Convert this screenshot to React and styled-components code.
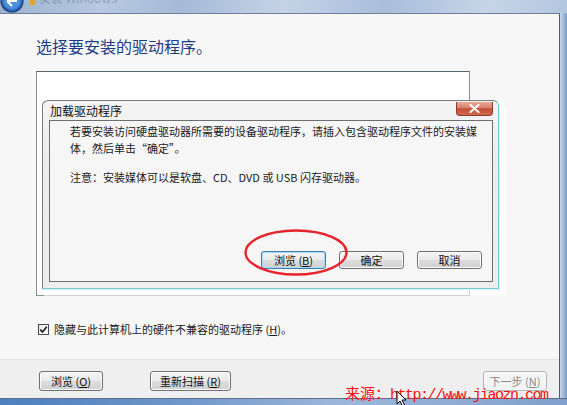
import React from 'react';
import styled, { createGlobalStyle } from 'styled-components';

const GlobalStyle = createGlobalStyle`
  html, body {
    margin: 0;
    padding: 0;
  }
  body {
    width: 567px;
    height: 405px;
    overflow: hidden;
    background: #8aa7cf;
    font-family: "Noto Sans CJK SC", "Liberation Sans", sans-serif;
  }
`;

const Screen = styled.div`
  position: relative;
  width: 567px;
  height: 405px;
  display: flex;
  flex-direction: column;
  overflow: hidden;
`;

const TitleBar = styled.div`
  flex: none;
  height: 13px;
  display: flex;
  align-items: flex-end;
  gap: 6px;
  overflow: hidden;
  background: linear-gradient(
    100deg,
    #9cb2cf 0%,
    #b7c9e0 18%,
    #a5bad7 32%,
    #c4d3e7 50%,
    #a9bedb 68%,
    #c6d5e8 86%,
    #b2c6df 100%
  );
`;

const TitleText = styled.span`
  align-self: flex-start;
  margin-top: -11px;
  font-size: 12px;
  color: rgba(40, 60, 90, 0.3);
  display: flex;
  align-items: center;
  gap: 4px;
`;

const TitleDot = styled.i`
  display: inline-block;
  width: 5px;
  height: 5px;
  margin-top: 10px;
  border-radius: 1px;
  background: #e8a030;
`;

const Middle = styled.div`
  flex: 1;
  display: flex;
  min-height: 0;
`;

const Window = styled.div`
  width: 560px;
  box-sizing: border-box;
  display: flex;
  flex-direction: column;
  border-top: 1px solid #6f7f96;
  border-right: 1px solid #4f5a69;
  background: #f7f7f7;
`;

const RightFrame = styled.div`
  flex: 1;
  background: linear-gradient(90deg, #c9d8ea 0%, #a8bfdc 40%, #7d9ccb 100%);
`;

const BottomFrame = styled.div`
  flex: none;
  height: 7px;
  border-top: 1px solid #5e6f86;
  box-sizing: border-box;
  background: linear-gradient(90deg, #4d7fbe 0%, #6c95c9 30%, #9db7da 60%, #7fa0cd 100%);
`;

const Content = styled.div`
  flex: 1;
  padding: 22px 0 0 36px;
  display: flex;
  flex-direction: column;
  align-items: flex-start;
`;

const Heading = styled.h1`
  margin: 0 0 15px;
  font-size: 16px;
  line-height: 20px;
  font-weight: 400;
  color: #1f3a86;
`;

const ListBox = styled.div`
  position: relative;
  width: 434px;
  height: 225px;
  box-sizing: border-box;
  border: 1px solid #8a8f97;
  border-top-color: #5c626b;
  background: #ffffff;
`;

const Dialog = styled.div`
  position: absolute;
  left: 5px;
  top: 28px;
  width: 457px;
  height: 189px;
  box-sizing: border-box;
  display: flex;
  flex-direction: column;
  border: 1px solid #7a7a7a;
  border-right-color: #73ccd6;
  border-bottom-color: #73ccd6;
  border-radius: 6px 6px 0 0;
  background: linear-gradient(#f4f4f4, #ececec 40%, #eeeeee);
  box-shadow: 1px 1px 0 #d8eef1, 5px 4px 0 3px rgba(255, 255, 255, 0.6);
`;

const DialogTitle = styled.div`
  height: 19px;
  padding-left: 7px;
  font-size: 12px;
  line-height: 20px;
  color: #111;
`;

const CloseButton = styled.div`
  position: absolute;
  top: 1px;
  right: 5px;
  width: 37px;
  height: 14px;
  box-sizing: border-box;
  display: flex;
  align-items: center;
  justify-content: center;
  border: 1px solid #8b3a2c;
  border-top: none;
  border-radius: 0 0 4px 4px;
  background: linear-gradient(#e9a996 0%, #d9806c 45%, #c44c34 52%, #cf6a4f 100%);
`;

const Panel = styled.div`
  flex: 1;
  margin: 0 5px 6px 6px;
  padding: 2px 10px 12px 20px;
  display: flex;
  flex-direction: column;
  border: 1px solid #6e6e6e;
  background: #f6f6f6;
  font-size: 11px;
  line-height: 17px;
  color: #1a1a1a;
`;

const Para = styled.p`
  margin: 0 0 ${(p) => p.$gap || 0}px;
  white-space: nowrap;
`;

const ButtonRow = styled.div`
  margin-top: auto;
  display: flex;
  justify-content: flex-end;
  gap: 13px;
`;

const Button = styled.button`
  box-sizing: border-box;
  width: ${(p) => p.$w}px;
  height: ${(p) => p.$h || 20}px;
  padding: 0;
  border: 1px solid ${(p) => (p.$primary ? '#3b7db0' : p.disabled ? '#aeb3b6' : '#707070')};
  border-radius: 3px;
  background: ${(p) =>
    p.disabled
      ? '#f4f4f4'
      : 'linear-gradient(#f3f3f3 0%, #ebebeb 48%, #dddddd 52%, #d0d0d0 100%)'};
  box-shadow: inset 0 0 0 1px ${(p) => (p.$primary ? '#a9dcf6' : '#fbfbfb')};
  font-family: "Noto Sans CJK SC", "Liberation Sans", sans-serif;
  font-size: 11px;
  line-height: 1;
  text-align: center;
  white-space: nowrap;
  color: ${(p) => (p.disabled ? '#8a8a8a' : '#111')};
`;

const Key = styled.u`
  text-underline-offset: 1px;
`;

const Circled = styled.span`
  position: relative;
  display: flex;
`;

const RedRing = styled.svg`
  position: absolute;
  left: -17px;
  top: -22px;
  width: 104px;
  height: 47px;
  overflow: visible;
  pointer-events: none;
`;

const CheckRow = styled.label`
  margin-top: 26px;
  padding-left: 2px;
  display: flex;
  align-items: center;
  gap: 5px;
  font-size: 11px;
  line-height: 14px;
  color: #1a1a1a;
`;

const CheckBox = styled.span`
  width: 11px;
  height: 11px;
  box-sizing: border-box;
  display: flex;
  align-items: center;
  justify-content: center;
  border: 1px solid #4a4a4a;
  background: linear-gradient(135deg, #e6e6e6, #ffffff);
`;

const Footer = styled.div`
  flex: none;
  height: 39px;
  box-sizing: border-box;
  padding: 11px 12px 0 39px;
  display: flex;
  align-items: flex-start;
  gap: 47px;
  border-top: 1px solid #e4e4e4;
  background: #efefef;
`;

const Spacer = styled.div`
  flex: 1;
`;

const Watermark = styled.div`
  position: absolute;
  left: 345px;
  top: 387px;
  font-family: "Liberation Mono", "Noto Sans CJK SC", monospace;
  font-size: 15px;
  line-height: 18px;
  white-space: nowrap;
  color: #ff1010;
`;

const Url = styled.span`
  letter-spacing: -1.5px;
`;

const Cursor = styled.svg`
  position: absolute;
  left: 396px;
  top: 390px;
  width: 11px;
  height: 17px;
`;

const CloseGlyph = () => (
  <svg width="11" height="9" viewBox="0 0 11 9">
    <path d="M1.5 1 L9.5 8 M9.5 1 L1.5 8" stroke="#ffffff" strokeWidth="2.2" strokeLinecap="round" />
  </svg>
);

const CheckMark = () => (
  <svg width="9" height="9" viewBox="0 0 9 9">
    <path d="M1.2 4.6 L3.5 7 L7.8 1.8" fill="none" stroke="#1c1c1c" strokeWidth="1.6" />
  </svg>
);

const Orb = () => (
  <svg width="24" height="13" viewBox="0 0 24 13">
    <circle cx="12" cy="1" r="11" fill="#2d6cc0" stroke="#1d3f72" strokeWidth="1.2" />
    <circle cx="12" cy="1" r="8.5" fill="#4c8fdc" />
    <path d="M7 1 L12 6 M7 1 L17 1" stroke="#ffffff" strokeWidth="2" />
  </svg>
);

const App = () => {
  return (
    <Screen>
      <GlobalStyle />
      <TitleBar>
        <Orb />
        <TitleText>
          <TitleDot />
          安装 Windows
        </TitleText>
      </TitleBar>

      <Middle>
        <Window>
          <Content>
            <Heading>选择要安装的驱动程序。</Heading>

            <ListBox>
              <Dialog>
                <DialogTitle>加载驱动程序</DialogTitle>
                <CloseButton>
                  <CloseGlyph />
                </CloseButton>
                <Panel>
                  <Para>若要安装访问硬盘驱动器所需要的设备驱动程序，请插入包含驱动程序文件的安装媒</Para>
                  <Para $gap={12}>体，然后单击“确定”。</Para>
                  <Para>注意：安装媒体可以是软盘、CD、DVD 或 USB 闪存驱动器。</Para>
                  <ButtonRow>
                    <Circled>
                      <Button $w={65} $h={18} $primary>
                        浏览 (<Key>B</Key>)
                      </Button>
                      <RedRing viewBox="0 0 104 47">
                        <ellipse cx="52" cy="23.5" rx="50.5" ry="22" fill="none" stroke="#e8232b" strokeWidth="2.4" />
                      </RedRing>
                    </Circled>
                    <Button $w={65} $h={18}>确定</Button>
                    <Button $w={65} $h={18}>取消</Button>
                  </ButtonRow>
                </Panel>
              </Dialog>
            </ListBox>

            <CheckRow>
              <CheckBox>
                <CheckMark />
              </CheckBox>
              <span>
                隐藏与此计算机上的硬件不兼容的驱动程序 (<Key>H</Key>)。
              </span>
            </CheckRow>
          </Content>

          <Footer>
            <Button $w={64}>
              浏览 (<Key>O</Key>)
            </Button>
            <Button $w={81}>
              重新扫描 (<Key>R</Key>)
            </Button>
            <Spacer />
            <Button $w={64} disabled>
              下一步 (<Key>N</Key>)
            </Button>
          </Footer>
        </Window>
        <RightFrame />
      </Middle>

      <BottomFrame />

      <Watermark>
        来源：<Url>http://www.jiaozn.com</Url>
      </Watermark>
      <Cursor viewBox="0 0 11 17">
        <path d="M1 1 L1 14 L4 11 L6.5 16 L8.5 15 L6 10 L10 10 Z" fill="#ffffff" stroke="#000000" strokeWidth="1" />
      </Cursor>
    </Screen>
  );
};

export default App;
